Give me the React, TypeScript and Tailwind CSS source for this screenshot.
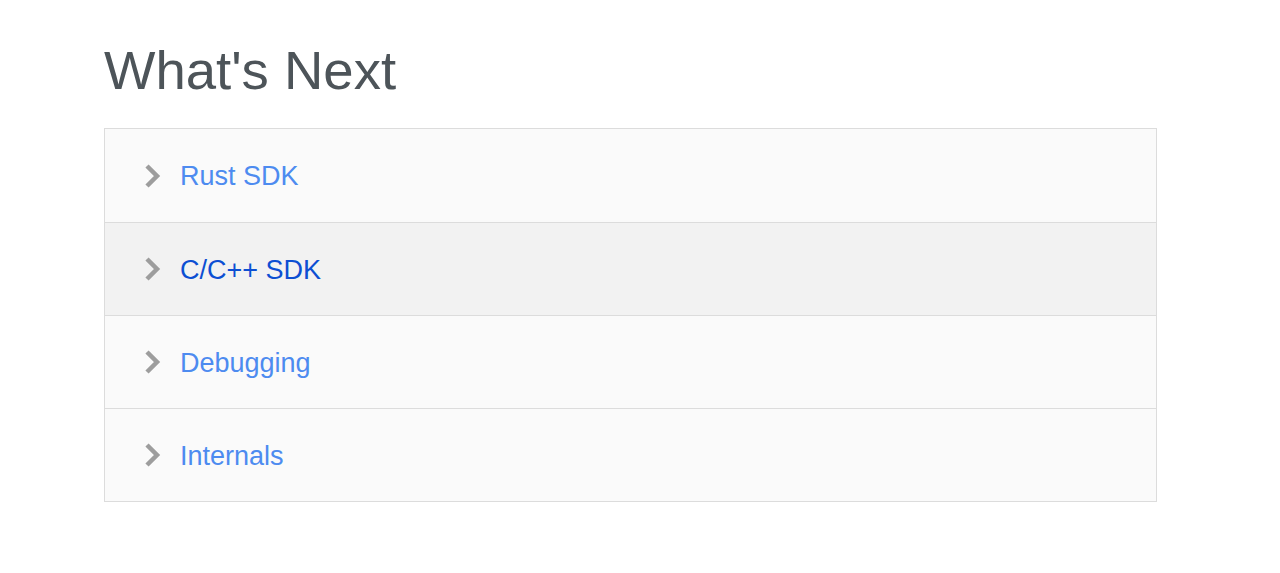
import React from 'react';

const items = [
  { label: 'Rust SDK', active: false },
  { label: 'C/C++ SDK', active: true },
  { label: 'Debugging', active: false },
  { label: 'Internals', active: false },
];

function Chevron() {
  return (
    <svg className="w-[18px] h-[26px] shrink-0" viewBox="0 0 18 26" fill="none">
      <polyline
        points="3,3 13,13 3,23"
        stroke="#9d9d9d"
        strokeWidth="4.5"
        strokeLinecap="butt"
        strokeLinejoin="miter"
      />
    </svg>
  );
}

export default function App() {
  return (
    <div className="min-h-screen bg-white font-['Liberation_Sans',Arial,sans-serif]">
      <div className="pl-[104px] pr-[123px] pt-[39px]">
        <h1 className="text-[54.5px] leading-[64px] text-[#4d5459] font-normal">What's Next</h1>

        <div className="mt-[25px] border border-[#dcdcdc]">
          {items.map((item, i) => (
            <div
              key={item.label}
              className={`flex items-center h-[93px] pl-[39px] gap-[18px] ${
                i > 0 ? 'border-t border-[#dcdcdc]' : ''
              } ${item.active ? 'bg-[#f2f2f2]' : 'bg-[#fafafa]'}`}
            >
              <Chevron />
              <a
                href="#"
                className={`text-[27px] leading-none pt-[2px] ${item.active ? 'text-[#0d4fd3]' : 'text-[#4d8bf0]'}`}
              >
                {item.label}
              </a>
            </div>
          ))}
        </div>
      </div>
    </div>
  );
}
